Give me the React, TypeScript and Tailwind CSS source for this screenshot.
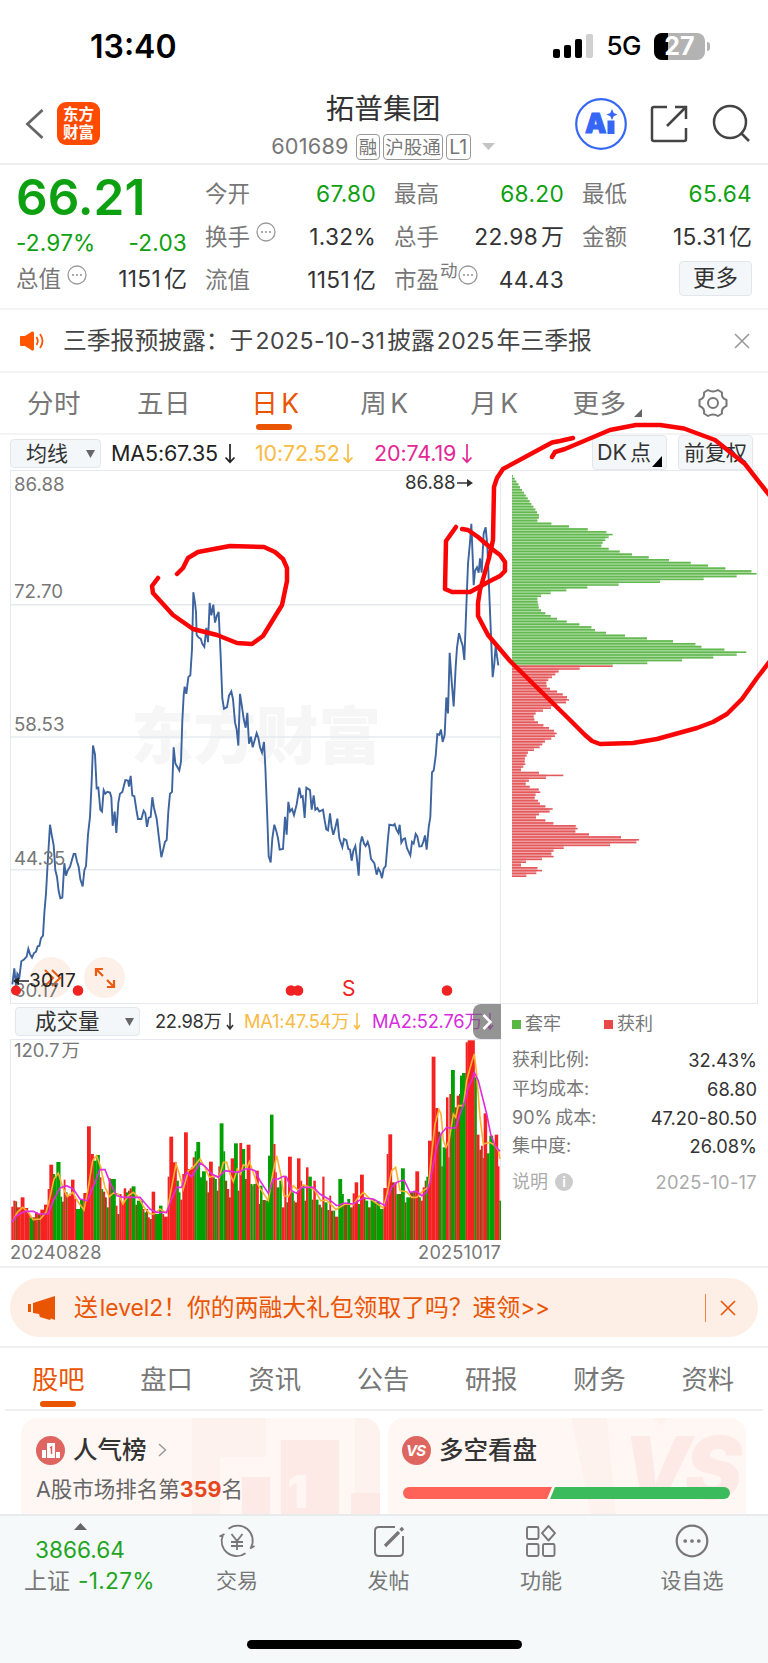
import React from 'react';

// Price line, chart units: x 33..1503, y 30..1522
const pricePoints = '37,1470 43,1425 48,1475 52,1440 58,1450 64,1405 72,1400 80,1392 85,1370 90,1385 96,1395 102,1382 108,1378 113,1363 118,1362 123,1340 129,1333 133,1270 138,1215 143,1130 150,1022 155,1050 161,1080 166,1150 171,1168 176,1208 181,1228 187,1226 193,1130 198,1165 203,1150 210,1140 221,1104 226,1104 231,1125 236,1140 241,1175 248,1195 253,1150 258,1138 264,1050 270,1000 275,900 279,800 285,825 290,920 295,918 301,980 306,985 311,925 316,935 322,930 330,932 334,945 338,1025 344,985 349,1045 355,960 360,935 367,930 376,897 384,898 387,915 392,885 397,940 403,942 410,985 414,1006 424,1006 431,983 436,990 441,1028 446,1003 452,1000 457,945 462,975 470,1005 477,1060 484,1113 490,1090 495,1070 500,1065 505,985 510,935 516,930 521,805 526,850 538,870 543,845 547,730 551,660 554,635 559,655 565,608 571,603 576,530 580,370 585,400 588,425 590,490 596,497 602,500 607,515 613,523 619,470 624,510 629,400 634,435 640,405 645,455 651,435 656,425 662,550 667,668 672,697 681,692 687,660 694,648 699,670 705,735 710,755 715,800 720,655 725,685 731,725 737,750 742,708 747,795 753,775 758,805 764,785 770,765 775,778 780,805 786,820 792,790 796,860 801,980 806,1110 812,1128 817,1060 823,1022 829,1040 834,1060 839,1092 849,1090 855,1000 860,1050 865,958 870,985 876,978 882,995 890,965 898,918 903,945 908,942 914,1003 919,918 930,925 935,980 941,940 946,980 952,975 958,985 969,980 974,1010 979,1035 984,1038 990,990 995,1030 1000,1050 1006,1030 1012,1005 1018,1060 1027,1085 1032,1062 1039,1065 1045,1090 1050,1092 1055,1123 1060,1095 1066,1082 1071,1120 1076,1165 1081,1075 1086,1055 1092,1075 1097,1082 1103,1070 1108,1085 1113,1118 1123,1130 1130,1162 1135,1145 1141,1155 1146,1172 1151,1145 1157,1138 1163,1070 1168,1022 1180,1024 1184,1020 1189,1035 1195,1045 1199,1022 1204,1072 1210,1062 1215,1060 1221,1088 1231,1108 1236,1070 1241,1075 1247,1048 1252,1055 1258,1083 1265,1082 1270,1070 1275,1052 1280,1092 1286,1030 1291,1000 1296,875 1301,870 1307,830 1312,768 1318,770 1323,755 1328,790 1334,770 1339,665 1344,710 1349,540 1355,620 1361,690 1367,580 1371,525 1377,485 1383,505 1388,520 1393,560 1399,410 1404,290 1410,230 1414,178 1418,270 1421,350 1425,310 1431,300 1436,315 1440,275 1445,315 1451,205 1457,188 1462,240 1466,330 1472,470 1478,608 1483,570 1487,520 1491,550 1495,575';

// Chip distribution, one value per price row, top to bottom
const lossRows = [3, 8, 13, 19, 24, 30, 36, 41, 47, 53, 58, 64, 70, 75, 81, 81, 76, 118, 171, 227, 283, 302, 290, 280, 272, 268, 290, 323, 360, 410, 471, 536, 588, 640, 718, 734, 674, 575, 444, 320, 226, 163, 116, 87, 76, 77, 79, 80, 87, 100, 116, 135, 164, 202, 238, 249, 282, 339, 405, 483, 550, 568, 637, 703, 674, 604, 510, 406];
const gainRows = [302, 203, 140, 130, 120, 109, 103, 104, 114, 135, 152, 165, 171, 162, 134, 117, 93, 71, 65, 67, 78, 94, 111, 126, 134, 129, 118, 99, 91, 83, 66, 48, 44, 39, 38, 40, 34, 27, 81, 154, 102, 51, 41, 53, 80, 85, 71, 68, 78, 84, 100, 122, 113, 81, 72, 100, 124, 191, 197, 190, 231, 327, 381, 373, 294, 155, 125, 118, 125, 90, 42, 27, 76, 90, 73, 43];
const chipRows = [...lossRows, ...gainRows];

type Bar = [number, number, 'r' | 'g' | 'b'];

// Volume bars: start x, top y, colour. b is where a rise and a fall overlap.
const volume: Bar[] = [
  [34, 618, 'r'], [40, 600, 'r'], [46, 602, 'b'], [51, 620, 'r'], [62, 590, 'r'], [73, 622, 'r'], [84, 638, 'r'], [89, 650, 'g'], [99, 650, 'b'], [105, 635, 'r'], [113, 640, 'b'], [121, 627, 'r'], [132, 612, 'r'], [143, 565, 'r'], [148, 492, 'r'], [159, 520, 'g'],
  [165, 530, 'g'], [169, 484, 'g'], [181, 588, 'g'], [186, 603, 'b'], [191, 537, 'r'], [196, 575, 'b'], [202, 585, 'r'], [213, 537, 'r'], [223, 595, 'r'], [228, 625, 'g'], [240, 595, 'g'], [250, 577, 'r'], [261, 377, 'r'], [272, 460, 'r'], [281, 480, 'g'], [289, 463, 'g'],
  [299, 530, 'r'], [304, 565, 'g'], [309, 573, 'r'], [315, 590, 'b'], [320, 620, 'g'], [326, 533, 'r'], [332, 535, 'g'], [347, 615, 'r'], [352, 640, 'b'], [358, 580, 'r'], [364, 605, 'r'], [371, 563, 'r'], [378, 575, 'g'], [384, 570, 'b'], [389, 563, 'r'], [395, 557, 'g'],
  [406, 612, 'b'], [411, 600, 'g'], [428, 625, 'r'], [433, 635, 'g'], [438, 625, 'b'], [444, 650, 'r'], [449, 655, 'b'], [455, 573, 'r'], [465, 640, 'g'], [477, 615, 'g'], [487, 640, 'r'], [492, 648, 'r'], [503, 528, 'r'], [508, 408, 'r'], [519, 485, 'r'], [530, 540, 'g'],
  [536, 575, 'g'], [541, 597, 'r'], [547, 520, 'r'], [552, 395, 'r'], [563, 505, 'r'], [573, 500, 'r'], [578, 470, 'r'], [584, 452, 'g'], [589, 424, 'g'], [600, 530, 'g'], [606, 512, 'g'], [617, 540, 'b'], [622, 575, 'b'], [627, 483, 'r'], [638, 530, 'b'], [644, 535, 'g'],
  [650, 570, 'b'], [655, 497, 'r'], [659, 368, 'g'], [670, 452, 'g'], [675, 540, 'b'], [681, 565, 'r'], [687, 590, 'b'], [692, 473, 'r'], [702, 428, 'g'], [713, 570, 'b'], [718, 427, 'r'], [726, 445, 'g'], [735, 535, 'b'], [740, 432, 'r'], [751, 550, 'g'], [757, 555, 'b'],
  [760, 550, 'g'], [767, 510, 'r'], [776, 610, 'b'], [780, 555, 'g'], [787, 598, 'b'], [797, 600, 'g'], [804, 465, 'g'], [810, 342, 'g'], [820, 430, 'r'], [826, 515, 'r'], [830, 560, 'g'], [838, 540, 'g'], [845, 620, 'r'], [853, 525, 'r'], [859, 605, 'b'], [864, 468, 'r'],
  [875, 575, 'g'], [881, 600, 'r'], [884, 605, 'b'], [891, 473, 'r'], [901, 540, 'r'], [906, 555, 'g'], [913, 600, 'b'], [918, 500, 'r'], [925, 528, 'g'], [935, 597, 'b'], [940, 540, 'r'], [947, 597, 'g'], [955, 612, 'b'], [962, 620, 'g'], [967, 528, 'r'], [973, 605, 'g'],
  [982, 628, 'b'], [988, 585, 'r'], [993, 630, 'b'], [1000, 630, 'g'], [1005, 648, 'r'], [1015, 535, 'g'], [1026, 580, 'g'], [1031, 610, 'b'], [1042, 595, 'g'], [1050, 620, 'b'], [1058, 578, 'r'], [1064, 545, 'r'], [1074, 610, 'g'], [1080, 522, 'r'], [1091, 590, 'b'],
  [1096, 600, 'g'], [1104, 620, 'b'], [1112, 595, 'g'], [1125, 605, 'b'], [1129, 603, 'g'], [1140, 625, 'g'], [1150, 562, 'r'], [1160, 460, 'r'], [1165, 401, 'r'], [1176, 545, 'b'], [1183, 545, 'r'], [1189, 580, 'g'], [1197, 580, 'b'], [1203, 503, 'g'], [1214, 605, 'b'],
  [1219, 590, 'g'], [1230, 575, 'b'], [1240, 570, 'b'], [1246, 512, 'r'], [1257, 590, 'g'], [1262, 600, 'r'], [1268, 560, 'r'], [1274, 540, 'b'], [1279, 528, 'g'], [1284, 420, 'r'], [1295, 168, 'r'], [1306, 322, 'r'], [1314, 393, 'b'], [1320, 400, 'g'], [1324, 497, 'b'],
  [1328, 440, 'g'], [1338, 290, 'r'], [1345, 470, 'b'], [1348, 280, 'r'], [1353, 208, 'g'], [1364, 320, 'b'], [1370, 285, 'r'], [1377, 280, 'b'], [1380, 225, 'g'], [1386, 217, 'g'], [1397, 125, 'r'], [1403, 119, 'r'], [1424, 230, 'g'], [1430, 402, 'r'], [1438, 447, 'b'],
  [1443, 435, 'r'], [1448, 472, 'b'], [1451, 338, 'r'], [1461, 458, 'g'], [1468, 405, 'g'], [1479, 430, 'g'], [1484, 402, 'r'], [1494, 497, 'r'], [1498, 600, 'g'],
];
const barColor = { r: '#f52222', g: '#00a000', b: '#84520f' };

const ma1 = '38,662 52,635 68,620 82,632 100,657 121,655 138,635 150,590 162,535 175,517 188,560 202,588 218,575 235,605 252,628 265,560 278,480 290,465 302,500 315,560 328,588 340,577 355,580 369,610 385,585 400,575 415,590 432,620 450,640 462,640 480,625 500,637 515,560 528,490 538,520 550,565 565,510 580,500 600,475 615,500 628,530 645,525 658,530 670,485 680,485 690,520 700,543 712,505 722,520 730,492 742,500 748,483 758,510 770,545 785,570 805,600 818,520 830,465 842,520 852,585 865,588 880,555 895,570 910,553 930,560 945,570 962,600 980,598 1008,627 1035,610 1060,612 1075,590 1090,575 1105,590 1125,605 1150,622 1162,575 1175,510 1187,500 1200,570 1220,573 1235,590 1250,590 1270,570 1285,560 1295,460 1305,370 1317,327 1323,340 1330,420 1338,440 1347,420 1360,340 1367,350 1375,315 1390,315 1400,240 1415,185 1423,160 1430,220 1440,350 1450,430 1470,425 1485,435 1495,450 1500,475';
const ma2 = '35,665 50,645 75,632 100,632 115,640 145,640 160,600 180,562 200,555 220,565 240,595 262,600 285,545 300,507 315,507 330,545 350,585 370,590 420,590 450,625 470,635 500,635 515,595 530,560 545,560 560,515 575,528 600,487 615,497 635,520 655,530 675,510 690,512 715,515 735,505 750,505 765,510 780,540 805,578 820,535 835,535 850,527 860,530 875,570 890,578 905,560 940,560 960,580 985,595 1010,615 1035,607 1060,610 1090,592 1120,595 1155,615 1175,560 1190,545 1212,538 1230,575 1250,572 1265,585 1280,575 1290,545 1300,490 1310,440 1323,400 1340,380 1350,382 1367,382 1380,340 1395,300 1405,260 1415,240 1423,215 1435,240 1445,280 1460,340 1472,400 1485,435 1500,452';

function Dots({ size = 20, className = '' }: { size?: number; className?: string }) {
  return <svg width={size} height={size} viewBox="0 0 20 20" fill="none" stroke="currentColor" strokeWidth="1.3" className={className}>
      <circle cx="10" cy="10" r="9" />
      <g fill="currentColor" stroke="none">
        <circle cx="6" cy="10" r="1.1" />
        <circle cx="10" cy="10" r="1.1" />
        <circle cx="14" cy="10" r="1.1" />
      </g>
    </svg>;
}

function DownArrow() {
  return <svg width="12" height="21" viewBox="0 0 12 21" fill="none" stroke="currentColor" strokeWidth="1.7">
      <path d="M6 1V19M1.5 14.5L6 19.2L10.5 14.5" />
    </svg>;
}

function SmallArrow() {
  return <svg width="8" height="18" viewBox="0 0 8 18" fill="none" stroke="currentColor" strokeWidth="1.5">
      <path d="M4 1V17M1 13L4 17L7 13" />
    </svg>;
}

function Close({ size = 16 }: { size?: number }) {
  return <svg width={size} height={size} viewBox="0 0 16 16" fill="none" stroke="currentColor" strokeWidth="1.6">
      <path d="M1 1L15 15M15 1L1 15" />
    </svg>;
}

function StatusBar() {
  return <div className="flex h-[90px] items-start justify-between pl-[90px] pr-[58px]">
      <span className="mt-[31px] text-[32px] font-semibold leading-8 text-black">13:40</span>
      <div className="mt-[32px] flex h-7 items-center">
        <svg width="41" height="26" viewBox="0 0 41 26">
          <rect x="0" y="16" width="7" height="9" rx="2" />
          <rect x="11" y="12" width="7" height="13" rx="2" />
          <rect x="22" y="6" width="7" height="19" rx="2" />
          <rect x="33" y="1" width="7" height="24" rx="2" fill="#d0d0d0" />
        </svg>
        <span className="ml-[12px] text-[26px] font-medium leading-none tracking-[-0.5px] text-black">5G</span>
        <div className="relative ml-[13px] h-[27px] w-[51px] rounded-[8px] bg-[#b3b3b3]">
          <div className="h-full w-[14px] rounded-l-[8px] bg-black" />
          <span className="absolute inset-0 text-center text-[25px] font-bold leading-[27px] text-white">27</span>
        </div>
        <div className="ml-0.5 h-[9px] w-[3px] rounded-r bg-[#b3b3b3]" />
      </div>
    </div>;
}

function Header() {
  return <header className="flex h-[75px] border-b-2 border-[#eeeeee] text-[#333]">
      <div className="flex w-[250px] items-start pl-[25px] pt-[12px]">
        <svg width="19" height="30" viewBox="0 0 19 30" fill="none" stroke="#666" strokeWidth="2.8" className="mt-[7px]">
          <path d="M17.5 1L2.5 15L17.5 29" />
        </svg>
        <div className="ml-[13px] grid h-[43px] w-[43px] place-content-center rounded-[9px] bg-[#ff4a00] text-[15.5px] font-bold leading-[17.5px] text-white">
          <span>东方</span>
          <span>财富</span>
        </div>
      </div>
      <div className="flex w-[266px] flex-col items-center pt-[4px]">
        <h1 className="text-[28.7px] leading-[30px]">拓普集团</h1>
        <div className="mt-[9px] flex h-[27px] items-center gap-[3px] text-[#777]">
          <span className="mr-1 text-[21.7px] tracking-[0.2px]">601689</span>
          <span className="rounded border-[1.5px] border-[#999] px-[2px] text-[18.5px] leading-6">融</span>
          <span className="rounded border-[1.5px] border-[#999] px-[1px] text-[18.5px] leading-6">沪股通</span>
          <span className="rounded border-[1.5px] border-[#999] px-[2.5px] text-[19.5px] leading-6">L1</span>
          <svg width="13" height="7" viewBox="0 0 13 7" className="ml-[8px]"><path d="M0 0H13L6.5 7Z" fill="#c4c4c4" /></svg>
        </div>
      </div>
      <div className="flex flex-1 items-start pl-[59px] pt-[8px]">
        <svg width="52" height="52" viewBox="0 0 52 52">
          <circle cx="26" cy="26" r="24.8" fill="none" stroke="#3566f5" strokeWidth="2.2" />
          <text x="10" y="35" fontSize="27" fontWeight="900" fill="#3566f5" stroke="#3566f5" strokeWidth="1">A</text>
          <rect x="32.5" y="22.5" width="7" height="13.5" fill="#3566f5" />
          <path d="M37 11L38.7 15L42.5 16.5L38.7 18.2L37 22L35.3 18.2L31.5 16.5L35.3 15Z" fill="#3566f5" />
        </svg>
        <svg width="38" height="38" viewBox="0 0 38 38" fill="none" stroke="#444" strokeWidth="2.5" className="ml-[23px] mt-[7px]">
          <path d="M17 2H4Q2 2 2 4V34Q2 36 4 36H34Q36 36 36 34V23M25 2H36V14M36 2L17 21" />
        </svg>
        <svg width="38" height="38" viewBox="0 0 38 38" fill="none" stroke="#444" strokeWidth="2.5" className="ml-[24px] mt-[6px]">
          <circle cx="18" cy="18" r="16" />
          <path d="M29 29L37 37" />
        </svg>
      </div>
    </header>;
}

function Quote({ label, value, unit, mark, green }: { label: string; value: string; unit?: string; mark?: React.ReactNode; green?: boolean }) {
  return <div className="flex h-[43px] items-center justify-between whitespace-nowrap leading-none">
      <span className="flex text-[22.5px] text-[#777]">{label}{mark}</span>
      <span className={`text-[22.7px] tracking-[0.3px] ${green ? 'text-[#0da010]' : 'text-[#333]'}`}>{value}{unit && <span className="ml-[3px] text-[23px] tracking-normal">{unit}</span>}</span>
    </div>;
}

function Quotes() {
  return <section className="flex h-[145px] gap-[18px] border-b-2 border-[#f4f4f4] px-4 pt-[8px]">
      <div className="w-[171px] text-[#0da010]">
        <div className="flex h-[49px] items-center text-[49.5px] font-semibold leading-none">66.21</div>
        <div className="flex h-[36px] items-center justify-between pt-[6px] text-[22.6px] tracking-[0.2px]">
          <span>-2.97%</span><span>-2.03</span>
        </div>
        <Quote label="总值" value="1151" unit="亿" mark={<Dots className="ml-[6px] -mt-[3px] text-[#999]" />} />
      </div>
      <div className="w-[171px]">
        <Quote label="今开" value="67.80" green />
        <Quote label="换手" value="1.32%" mark={<Dots className="ml-[6px] -mt-[4px] text-[#999]" />} />
        <Quote label="流值" value="1151" unit="亿" />
      </div>
      <div className="w-[170px]">
        <Quote label="最高" value="68.20" green />
        <Quote label="总手" value="22.98" unit="万" />
        <Quote label="市盈" value="44.43" mark={<><span className="-mt-[7px] ml-px text-[17.5px]">动</span><Dots className="-mt-[4px] text-[#999]" /></>} />
      </div>
      <div className="w-[170px]">
        <Quote label="最低" value="65.64" green />
        <Quote label="金额" value="15.31" unit="亿" />
        <div className="ml-auto mt-[2px] grid h-[35px] w-[73px] place-items-center rounded border border-[#e3e7eb] bg-[#f3f7fa] text-[22.5px] leading-none text-[#333]">更多</div>
      </div>
    </section>;
}

function Notice() {
  return <section className="flex h-[63px] items-center border-b-2 border-[#f4f4f4] pl-5 pr-[18px] text-[#999]">
      <svg width="24" height="20" viewBox="0 0 24 20" fill="#ff5400">
        <path d="M0 6Q0 5 1 5H5L12 0.5Q14 0 14 2V18Q14 20 12 19.5L5 15H1Q0 15 0 14Z" />
        <path d="M16.5 6Q19 10 16.5 14M20 3Q25 10 20 17" fill="none" stroke="#ff5400" strokeWidth="1.8" />
      </svg>
      <span className="ml-[19px] flex-1 whitespace-nowrap text-[23.8px] text-[#444]">三季报预披露：于<span className="ml-[2px] mr-[2px] text-[23px] tracking-[0.5px]">2025-10-31</span>披露<span className="mx-[2px] text-[23px] tracking-[0.3px]">2025</span>年三季报</span>
      <Close />
    </section>;
}

function PeriodTabs() {
  const tabs = ['分时', '五日', '日K', '周K', '月K', '更多'];
  const widths = ['w-[108px]', 'w-[112px]', 'w-[111px]', 'w-[107px]', 'w-[113px]', 'w-[97px]'];
  return <nav className="flex h-[62px] border-b-2 border-[#f4f4f4] text-[26.5px] leading-none text-[#777]">
      {tabs.map((tab, i) => <div key={tab} className={`${widths[i]} flex flex-col items-center pt-[17px] ${tab === '日K' ? 'text-[#ea5504]' : ''}`}>
          <span className="relative tracking-[0.5px]">{tab.replace('K', '')}{tab.includes('K') && <span className="ml-[3px]">K</span>}
            {tab === '更多' && <svg width="8" height="8" viewBox="0 0 8 8" className="absolute -right-[15px] bottom-0 fill-[#666]"><path d="M8 0V8H0Z" /></svg>}
          </span>
          {tab === '日K' && <div className="-ml-1 mt-[7px] h-[6px] w-[36px] rounded-full bg-[#ea5504]" />}
        </div>)}
      <svg width="30" height="30" viewBox="0 0 30 30" fill="none" stroke="#777" strokeWidth="2" className="ml-[50px] mt-[15px]">
        <path d="M10 2Q15 5 20 2L24 4.5Q23 10 28.5 12V18Q23 20 24 25.5L20 28Q15 25 10 28L6 25.5Q7 20 1.5 18V12Q7 10 6 4.5Z" strokeLinejoin="round" />
        <circle cx="15" cy="15" r="5" />
      </svg>
    </nav>;
}

function AverageRow() {
  return <div className="flex h-[35px] items-start pl-[10px] text-[21.5px] leading-none">
      <div className="mt-[4px] flex h-[29px] w-[91px] items-center justify-between rounded border border-[#e3e7eb] bg-[#f3f7fa] pl-[15px] pr-[5px] text-[21px] text-[#333]">均线
        <svg width="9" height="8" viewBox="0 0 9 8" fill="#666"><path d="M0 0H9L4.5 8Z" /></svg>
      </div>
      <div className="ml-[10px] mt-[8px] flex w-[144px] items-center justify-between pr-[19px] tracking-[-0.15px] text-[#222]">MA5:67.35<DownArrow /></div>
      <div className="mt-[8px] flex w-[119px] items-center justify-between pr-[20px] tracking-[-0.15px] text-[#f8bb43]">10:72.52<DownArrow /></div>
      <div className="mt-[8px] flex w-[99px] items-center justify-between tracking-[-0.15px] text-[#e32896]">20:74.19<DownArrow /></div>
      <div className="relative ml-[119px] flex h-[35px] w-[75px] items-center rounded border border-[#e3e7eb] bg-[#f3f7fa] pl-[4px] text-[#333]">DK<span className="ml-[3px] text-[21px]">点</span>
        <svg width="10" height="11" viewBox="0 0 10 11" className="absolute bottom-[2px] right-[4px] fill-black"><path d="M10 0V11H0Z" /></svg>
      </div>
      <div className="ml-[11px] grid h-[35px] w-[75px] place-items-center rounded border border-[#e3e7eb] bg-[#f3f7fa] text-[21px] text-[#333]">前复权</div>
    </div>;
}

function PriceChart() {
  return <div className="relative h-[534px] w-[491px] border border-[#e6eaf0] text-[18.7px] leading-none text-[#777]">
      <div className="absolute left-[120px] top-[234px] text-[62.5px] font-black text-[#f6f6f6]">东方财富</div>
      <svg className="absolute inset-0" width="490" height="532" viewBox="33 30 1470 1492" preserveAspectRatio="none" fill="none">
        <path d="M33 405H1503M33 776H1503M33 1148H1503" stroke="#e6eaf0" strokeWidth="1.5" vectorEffect="non-scaling-stroke" />
        <polyline points={pricePoints} stroke="#3d649f" strokeWidth="1.9" vectorEffect="non-scaling-stroke" />
      </svg>
      <span className="absolute left-[3px] top-[5px]">86.88</span>
      <span className="absolute left-[3px] top-[112px]">72.70</span>
      <span className="absolute left-[3px] top-[245px]">58.53</span>
      <span className="absolute left-[3px] top-[379px]">44.35</span>
      <div className="absolute left-[394px] top-[3px] flex items-center text-[#333]">86.88
        <svg width="17" height="10" viewBox="0 0 17 10" fill="#333"><path d="M1 4.2H11V1L17 5L11 9V5.8H1Z" /></svg>
      </div>
      <div className="absolute left-[20px] top-[486px] size-[41px] rounded-full bg-[#fdf0e8]" />
      <svg className="absolute left-[33px] top-[498px]" width="18" height="18" viewBox="0 0 18 18" fill="none" stroke="#ea5b10" strokeWidth="2"><path d="M1 1L9 9L1 17M8 1L16 9L8 17" /></svg>
      <div className="absolute left-[73px] top-[486px] grid size-[41px] place-items-center rounded-full bg-[#fdf0e8]">
        <svg width="22" height="22" viewBox="0 0 22 22" fill="none" stroke="#ea5b10" strokeWidth="2.2"><path d="M9 2H2V9M2 2L9 9M13 20H20V13M20 20L13 13" /></svg>
      </div>
      <span className="absolute left-[3px] top-[511px]">30.17</span>
      <div className="absolute left-[2px] top-[500px] flex items-center text-[19px] tracking-[0.3px] text-[#222]">
        <svg width="16" height="10" viewBox="0 0 16 10" fill="#222"><path d="M16 4.2H6V1L0 5L6 9V5.8H16Z" /></svg>30.17
      </div>
      <svg className="absolute left-0 top-[512px]" width="489" height="16" viewBox="0 0 489 16" fill="#f02222">
        <circle cx="5" cy="7.5" r="5" />
        <circle cx="67" cy="7.5" r="5.3" />
        <circle cx="280" cy="7.5" r="5.3" />
        <circle cx="287" cy="7.5" r="5.3" />
        <circle cx="436" cy="7.5" r="5.3" />
      </svg>
      <span className="absolute left-[331px] top-[507px] text-[21px] text-[#f02222]">S</span>
    </div>;
}

function ChipChart() {
  return <div className="h-[534px] w-[257px] border border-l-0 border-[#e6eaf0] pl-[11px]">
      <svg width="245" height="532" viewBox="0 0 245 532">
        {chipRows.map((v, i) => <g key={i} fill={i < lossRows.length ? '#63b950' : '#e4595c'}>
            <rect x="0" y={4 + i * 2.8} width={Math.min(v, chipRows[i + 1] ?? 0) / 3} height="2.8" opacity="0.55" />
            <rect x="0" y={4 + i * 2.8} width={v / 3} height="1.6" />
          </g>)}
      </svg>
    </div>;
}

function VolumeHeader() {
  return <div className="relative flex h-[35px] items-center pl-[5px] text-[18.3px] leading-none">
      <div className="flex h-[29px] w-[125px] items-center justify-between rounded border border-[#e3e7eb] bg-[#f3f7fa] pl-[19px] pr-[5px] text-[21.5px] text-[#333]">成交量
        <svg width="9" height="8" viewBox="0 0 9 8" fill="#666"><path d="M0 0H9L4.5 8Z" /></svg>
      </div>
      <div className="ml-[15px] flex w-[79px] items-center justify-between whitespace-nowrap tracking-[-0.3px] text-[#333]">22.98万<SmallArrow /></div>
      <div className="ml-[10px] flex w-[117px] items-center justify-between whitespace-nowrap tracking-[-0.2px] text-[#f8bb43]">MA1:47.54万<SmallArrow /></div>
      <div className="ml-[11px] flex w-[122px] items-center justify-between whitespace-nowrap tracking-[-0.2px] text-[#d72be0]">MA2:52.76万<SmallArrow /></div>
      <div className="absolute right-0 top-0 grid h-[35px] w-[28px] place-items-center rounded-l-lg bg-[#666666]/70">
        <svg width="10" height="16" viewBox="0 0 10 16" fill="none" stroke="white" strokeWidth="2.6"><path d="M1.5 1L8.5 8L1.5 15" /></svg>
      </div>
    </div>;
}

function VolumeChart() {
  return <>
      <div className="relative h-[201px] w-[491px] border border-[#e6eaf0]">
        <svg className="absolute inset-0" width="490" height="200" viewBox="33 118 1470 600" preserveAspectRatio="none" fill="none">
          {volume.map(([x, y, c], i) => <rect key={x} x={x} y={y} width={(volume[i + 1]?.[0] ?? 1503) - x + 0.5} height={718 - y} fill={barColor[c]} />)}
          <polyline points={ma1} stroke="#fbb32f" strokeWidth="1.6" vectorEffect="non-scaling-stroke" />
          <polyline points={ma2} stroke="#e02be0" strokeWidth="1.6" vectorEffect="non-scaling-stroke" />
        </svg>
        <span className="absolute left-[3px] top-[1px] text-[18.5px] leading-none text-[#777]">120.7<span className="ml-0.5">万</span></span>
      </div>
      <div className="flex h-[25px] items-center justify-between text-[18.2px] tracking-[0.2px] text-[#777]">
        <span>20240828</span><span>20251017</span>
      </div>
    </>;
}

function ChipStats() {
  const rows = [['获利比例:', '32.43%'], ['平均成本:', '68.80'], ['90%成本:', '47.20-80.50'], ['集中度:', '26.08%']];
  return <div className="w-[256px] pl-[11px] text-[18px] leading-none text-[#777]">
      <div className="mt-[10px] flex h-[20px] items-center">
        <i className="mr-1 size-[9px] bg-[#5ab743]" />套牢
        <i className="ml-[43px] mr-1 size-[9px] bg-[#e9484a]" />获利
      </div>
      <div className="mt-[12px]">
        {rows.map(([label, value]) => <div key={label} className="flex h-[28.7px] items-center justify-between">
            <span>{label.startsWith('90%') ? <><span className="mr-[3px]">90%</span>成本:</> : label}</span><span className="text-[18.3px] text-[#333]">{value}</span>
          </div>)}
      </div>
      <div className="mt-[7px] flex h-[28px] items-center text-[#aaa]">说明
        <span className="ml-[7px] grid size-[18px] place-items-center rounded-full bg-[#ccc] text-[14px] font-semibold text-white">i</span>
        <span className="ml-auto text-[18.3px] tracking-[0.3px]">2025-10-17</span>
      </div>
    </div>;
}

function Banner() {
  return <section className="h-[82px] border-y-2 border-[#eff0f3] pt-[10px]">
      <div className="ml-[10px] flex h-[59px] w-[748px] items-center rounded-full bg-[#fdeee6] pl-[18px] pr-[22px] text-[#ea5504]">
        <svg width="28" height="24" viewBox="0 0 28 24" fill="#ea5504"><path d="M0 8H3V16H0ZM5 7L27 0V24L23 22.5L22 24L12 21L11 18L5 17Z" /></svg>
        <span className="ml-[18px] flex-1 text-[23.8px]">送<span className="ml-0.5 text-[22.8px]">level2</span>！你的两融大礼包领取了吗？速领<span className="text-[22.5px]">&gt;&gt;</span></span>
        <div className="mr-[14px] h-[28px] w-[1.5px] bg-[#ea5504]/70" />
        <Close />
      </div>
    </section>;
}

function InfoTabs() {
  return <nav className="mx-[5px] flex h-[63px] justify-between border-b-2 border-[#eeeff1] pl-[27px] pr-[29px] pt-[19px] text-[26.3px] leading-none text-[#777]">
      {['股吧', '盘口', '资讯', '公告', '研报', '财务', '资料'].map((tab, i) => <div key={tab} className={i === 0 ? 'flex flex-col items-center text-[#ea5504]' : ''}>
          {tab}
          {i === 0 && <div className="mt-[8px] h-[6px] w-[36px] rounded-full bg-[#ea5504]" />}
        </div>)}
    </nav>;
}

function Cards() {
  return <section className="flex h-[103px] gap-[8px] overflow-hidden pl-[21px] pt-[7px] text-[#333]">
      <div className="relative h-[120px] w-[359px] overflow-hidden rounded-[16px] bg-[#fff7f4] pl-[15px] pt-[17px]">
        <svg className="absolute right-0 top-0" width="190" height="97" viewBox="0 0 190 97">
          <path d="M2 0H76V39H30V97H2ZM165 0H190V80H165Z" fill="#fef2ef" />
          <path d="M52 59H80V97H52ZM91 22H149V97H91ZM161 75H190V97H161Z" fill="#fdeae7" />
        </svg>
        <span className="absolute right-[72px] top-[50px] text-[46px] font-black leading-[46px] text-[#fff6f3]">1</span>
        <div className="relative flex h-[30px] items-center text-[24.5px] font-medium leading-none">
          <svg width="29" height="29" viewBox="0 0 29 29"><circle cx="14.5" cy="14.5" r="14.5" fill="#df6660" /><path d="M6 14H10V22H6ZM11 7H19V22H11ZM20 16H24V22H20Z" fill="white" /><path d="M14 12L15.5 11V18" fill="none" stroke="#df5f58" strokeWidth="1.5" /></svg>
          <span className="ml-[8px]">人气榜</span>
          <svg width="9" height="14" viewBox="0 0 9 14" fill="none" stroke="#999" strokeWidth="1.5" className="ml-[11px]"><path d="M1 1L7.5 7L1 13" /></svg>
        </div>
        <div className="relative mt-[10px] text-[21.5px] leading-[28px] text-[#666]">A股市场排名第<b className="font-bold text-[#e5461c]">359</b>名</div>
      </div>
      <div className="relative h-[120px] w-[358px] overflow-hidden rounded-[16px] bg-[#fff7f4] pl-[14px] pt-[17px]">
        <svg className="absolute right-0 top-0" width="175" height="97" viewBox="0 0 175 97">
          <path d="M0 0H36L45 97H20ZM82 0H98L90 8Z" fill="#fef2ef" />
        </svg>
        <span className="absolute right-[10px] top-0 text-[86px] font-black italic leading-[100px] tracking-[-6px] text-[#fdeae7]">VS</span>
        <div className="relative flex h-[30px] items-center text-[24.5px] font-medium leading-none">
          <span className="grid size-[29px] place-items-center rounded-full bg-[#df6660] pr-0.5 text-[15px] font-bold italic tracking-[-1px] text-white">VS</span>
          <span className="ml-[8px]">多空看盘</span>
        </div>
        <svg width="328" height="12" viewBox="0 0 328 12" className="relative ml-px mt-[22px]">
          <path d="M6 0H149L144 12H6A6 6 0 0 1 6 0Z" fill="#ff6257" />
          <path d="M152 0H321A6 6 0 0 1 321 12H147Z" fill="#3bbb5c" />
        </svg>
      </div>
    </section>;
}

function BottomBar() {
  const icon = 'mb-[12px] h-[34px] w-[36px]';
  return <footer className="h-[149px] border-t-2 border-[#e8eaec] bg-[#f5f9fa] text-[#777]">
      <div className="flex h-[93px] text-[21px] leading-none">
        <div className="flex w-[162px] flex-col pt-[7px]">
          <svg width="13" height="7" viewBox="0 0 13 7" className="ml-[74px]" fill="#666"><path d="M6.5 0L13 7H0Z" /></svg>
          <span className="ml-[35px] mt-[7px] text-[22.6px] leading-[26px] text-[#1fa51f]">3866.64</span>
          <span className="ml-[24px] mt-[3px] whitespace-nowrap text-[23px] leading-[30px]">上证<span className="ml-[8px] text-[22.7px] tracking-[0.3px] text-[#1fa51f]">-1.27%</span></span>
        </div>
        <div className="flex w-[150px] flex-col items-center pt-[8px]">
          <svg className={icon} viewBox="0 0 36 34" fill="none" stroke="currentColor" strokeWidth="1.8">
            <path d="M9.5 4.7A15 15 0 0 1 32 23.5M35.5 22L31 24.5M26.5 29.3A15 15 0 0 1 4 11M0.5 12.5L5.5 10M12.5 10L18 17L23.5 10M18 17V26M12 18H24M12 22H24" />
          </svg>交易
        </div>
        <div className="flex w-[153px] flex-col items-center pt-[8px]">
          <svg className={icon} viewBox="0 0 36 34" fill="none" stroke="currentColor" strokeWidth="2">
            <path d="M24 3H8Q4 3 4 7V28Q4 32 8 32H28Q32 32 32 28V12" />
            <path d="M14 22L28 8M29.5 6.5L32 4" strokeWidth="3.3" />
          </svg>发帖
        </div>
        <div className="flex w-[152px] flex-col items-center pt-[8px]">
          <svg className={icon} viewBox="0 0 36 34" fill="none" stroke="currentColor" strokeWidth="1.9">
            <rect x="4" y="3" width="11.5" height="12" rx="1.5" />
            <rect x="4" y="20" width="11.5" height="12" rx="1.5" />
            <rect x="20" y="20" width="11.5" height="12" rx="1.5" />
            <path d="M25.5 2L32 9.2L25.5 16.5L19 9.2Z" strokeLinejoin="round" />
          </svg>功能
        </div>
        <div className="flex w-[150px] flex-col items-center pt-[8px]">
          <Dots size={34} className="mb-[12px]" />设自选
        </div>
      </div>
      <div className="mx-auto mt-[31px] h-[9px] w-[275px] rounded-full bg-black" />
    </footer>;
}

// Hand-drawn marks over the charts
function Marks() {
  return <svg className="pointer-events-none absolute left-0 top-0" width="768" height="800" viewBox="0 0 768 800" fill="none" stroke="#fa0505" strokeWidth="4.5" strokeLinecap="round" strokeLinejoin="round">
      <path d="M158 578L152 586L153 593L173 615L193 629L217 635L237 643L252 644L263 636L282 605L287 581L287 568L283 559L275 552L264 547L230 546L198 552L188 558L183 568L177 574" />
      <path d="M456 527L446 541L445 589L452 592L470 592L490 581L500 576L505 571V562L500 555L492 549L478 537L468 530L462 529" />
      <path d="M573 438L560 441L552 442.5L503 469L497 478L494 487L493 540L489 558L480 590L478 603V616L488 635L510 661L572 722L585 735L592 741L600 744L633 743L657 739L697 728L713 722L727 714L742 699L757 678L770 661" />
      <path d="M552 457L555 452L565 449L610 430L636 425H660L684 428.5L715 440L745 464L770 496" />
    </svg>;
}

export default function App() {
  return <div className="relative w-[768px] overflow-hidden bg-white font-['Inter','Noto_Sans_CJK_SC',sans-serif]" lang="zh-CN">
      <StatusBar />
      <Header />
      <Quotes />
      <Notice />
      <PeriodTabs />
      <AverageRow />
      <div className="flex pl-[10px]">
        <PriceChart />
        <ChipChart />
      </div>
      <div className="flex h-[262px] pl-[10px]">
        <div className="w-[491px]">
          <VolumeHeader />
          <VolumeChart />
        </div>
        <ChipStats />
      </div>
      <Banner />
      <InfoTabs />
      <Cards />
      <BottomBar />
      <Marks />
    </div>;
}
